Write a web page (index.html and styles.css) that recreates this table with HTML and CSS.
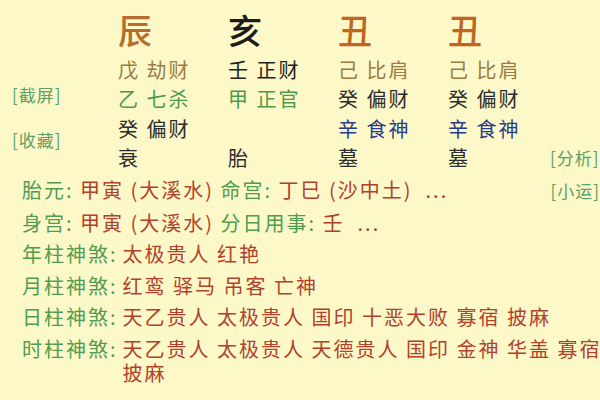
FILE: index.html
```html
<!DOCTYPE html>
<html lang="zh-CN">
<head>
<meta charset="utf-8">
<title>八字排盘</title>
<link rel="stylesheet" href="styles.css">
</head>
<body>
<div class="page">
  <div class="pillars">
    <div class="big c-chen col1">辰</div>
    <div class="big c-hai col2">亥</div>
    <div class="big c-chou col3">丑</div>
    <div class="big c-chou col4">丑</div>

    <div class="cell tan col1 r2">戊 劫财</div>
    <div class="cell black col2 r2">壬 正财</div>
    <div class="cell tan col3 r2">己 比肩</div>
    <div class="cell tan col4 r2">己 比肩</div>

    <div class="side side-left r3">[截屏]</div>
    <div class="cell green col1 r3">乙 七杀</div>
    <div class="cell green col2 r3">甲 正官</div>
    <div class="cell dark col3 r3">癸 偏财</div>
    <div class="cell dark col4 r3">癸 偏财</div>

    <div class="side side-left r45">[收藏]</div>
    <div class="cell dark col1 r4">癸 偏财</div>
    <div class="cell navy col3 r4">辛 食神</div>
    <div class="cell navy col4 r4">辛 食神</div>

    <div class="cell dark col1 r5">衰</div>
    <div class="cell dark col2 r5">胎</div>
    <div class="cell dark col3 r5">墓</div>
    <div class="cell dark col4 r5">墓</div>
    <div class="side side-right r5">[分析]</div>
  </div>

  <div class="info">
    <div class="line">
      <span class="txt"><span class="lbl">胎元:</span> <span class="val">甲寅 (大溪水)</span> <span class="lbl">命宫:</span> <span class="val">丁巳 (沙中土)</span>  <span class="val">...</span></span>
      <span class="side side-inline">[小运]</span>
    </div>
    <div class="line">
      <span class="txt"><span class="lbl">身宫:</span> <span class="val">甲寅 (大溪水)</span> <span class="lbl">分日用事:</span> <span class="val">壬</span>  <span class="val">...</span></span>
    </div>
    <div class="row">
      <span class="lbl key">年柱神煞:</span>
      <span class="val list">太极贵人 红艳</span>
    </div>
    <div class="row">
      <span class="lbl key">月柱神煞:</span>
      <span class="val list">红鸾 驿马 吊客 亡神</span>
    </div>
    <div class="row">
      <span class="lbl key">日柱神煞:</span>
      <span class="val list">天乙贵人 太极贵人 国印 十恶大败 寡宿 披麻</span>
    </div>
    <div class="row">
      <span class="lbl key">时柱神煞:</span>
      <span class="val list">天乙贵人 太极贵人 天德贵人 国印 金神 华盖 寡宿 披麻</span>
    </div>
    <div class="row cut">
      <span class="dark">节气: 生于立春后</span>
    </div>
  </div>
</div>
</body>
</html>
```

FILE: styles.css
```css
html, body {
  margin: 0;
  padding: 0;
  background: #fcf8c7;
  overflow: hidden;
}

.page {
  width: 600px;
  height: 400px;
  font-family: "Noto Sans CJK SC", "Noto Sans", sans-serif;
  background: #fcf8c7;
  overflow: hidden;
}

.pillars {
  display: grid;
  grid-template-columns: 118px 110px 110px 110px 102px 1fr;
  grid-template-rows: 55px repeat(4, 29.3px);
}

.big {
  grid-row: 1;
  font-size: 34px;
  line-height: 50px;
  padding-top: 5px;
  font-weight: 500;
}

.col1 { grid-column: 2; }
.col2 { grid-column: 3; }
.col3 { grid-column: 4; }
.col4 { grid-column: 5; }
.r2 { grid-row: 2; }
.r3 { grid-row: 3; }
.r4 { grid-row: 4; }
.r5 { grid-row: 5; }
.r45 { grid-row: 4 / 6; align-self: center; }

.cell {
  font-size: 20px;
  letter-spacing: 2px;
  line-height: 29.3px;
  white-space: nowrap;
}

.c-chen { color: #b46e30; }
.c-hai { color: #1c1c1c; }
.c-chou { color: #c0661f; }

.tan { color: #9c7c44; }
.black { color: #1f1f1f; }
.green { color: #4c9a4c; }
.dark { color: #2c2c2c; }
.navy { color: #283a8c; }

.side {
  color: #5e9e68;
  font-size: 17px;
  letter-spacing: 1px;
  line-height: 29.3px;
  white-space: nowrap;
}
.side-left { grid-column: 1; padding-left: 12px; margin-top: -4px; }
.r45.side-left { margin-top: -6px; }
.side-right { grid-column: 6; }
.side-inline { line-height: 24px; }

.info {
  display: flex;
  flex-direction: column;
  gap: 7.5px;
  padding: 6px 0 0 22px;
}

.line {
  display: flex;
  justify-content: space-between;
  align-items: baseline;
  font-size: 20px;
  letter-spacing: 2px;
  line-height: 24px;
}

.txt { white-space: pre; }

.row {
  display: flex;
  align-items: baseline;
  font-size: 20px;
  letter-spacing: 2px;
  line-height: 24px;
}

.lbl { color: #4f9c52; }
.val { color: #b0412c; }
.key { flex: none; padding-right: 5px; }
.list { flex: 1; min-width: 0; word-break: keep-all; margin-right: -14px; }

.cut { margin-top: 12px; }
```
